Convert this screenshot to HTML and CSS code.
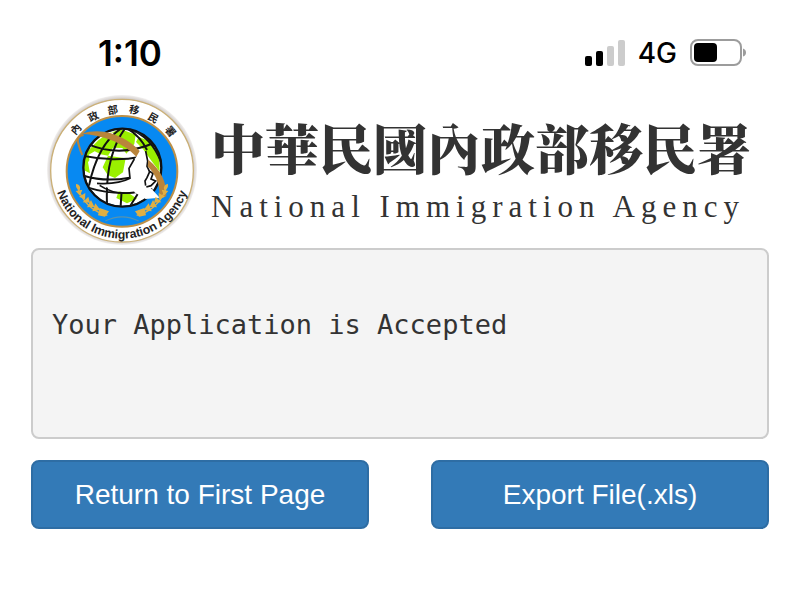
FILE: index.html
```html
<!DOCTYPE html>
<html lang="en">
<head>
<meta charset="utf-8">
<meta name="viewport" content="width=device-width, initial-scale=1">
<title>National Immigration Agency</title>
<link rel="stylesheet" href="styles.css">
</head>
<body>
<div class="status-bar">
  <time class="clock">1:10</time>
  <div class="indicators">
    <svg class="signal" viewBox="0 0 40 26" aria-hidden="true">
      <rect x="0" y="16" width="7" height="10" rx="2"/>
      <rect x="11" y="11" width="7" height="15" rx="2"/>
      <rect class="off" x="22" y="6" width="7" height="20" rx="2"/>
      <rect class="off" x="33" y="0" width="7" height="26" rx="2"/>
    </svg>
    <span class="network">4G</span>
    <svg class="battery" viewBox="0 0 56 28" aria-hidden="true">
      <rect x="1" y="1" width="50" height="25" rx="7" fill="#fff" stroke="#9c9c9c" stroke-width="2"/>
      <rect x="4" y="4" width="23" height="19" rx="4" fill="#000"/>
      <path d="M53 9.500q3 1 3 4t-3 4z" fill="#9c9c9c"/>
    </svg>
  </div>
</div>
<header class="brand">
  <svg class="seal" viewBox="22 22 450 450" role="img" aria-label="Agency seal">
    <defs>
      <path id="arc-bottom" d="M44 282A206 206 0 0 0 450 282"/>
      <radialGradient id="rim">
        <stop offset=".94" stop-color="#c9c3c0"/>
        <stop offset="1" stop-color="#f3f1f0"/>
      </radialGradient>
      <clipPath id="globe"><circle cx="248" cy="240" r="115"/></clipPath>
    </defs>
    <circle cx="247" cy="247" r="225" fill="url(#rim)"/>
    <circle cx="247" cy="249" r="214" fill="#fff" stroke="#cbb076" stroke-width="4"/>
    <circle cx="247" cy="251" r="166" fill="#0789f2" stroke="#bd9048" stroke-width="6"/>
    <g class="seal-cjk">
      <text transform="translate(109 125) rotate(-48)" dy="11">內</text>
      <text transform="translate(161 87) rotate(-28)" dy="11">政</text>
      <text transform="translate(219 67) rotate(-9)" dy="11">部</text>
      <text transform="translate(284 67) rotate(11)" dy="11">移</text>
      <text transform="translate(341 91) rotate(30)" dy="11">民</text>
      <text transform="translate(392 131) rotate(50)" dy="11">署</text>
    </g>
    <text class="seal-latin"><textPath href="#arc-bottom" startOffset="50%">National Immigration Agency</textPath></text>
    <g clip-path="url(#globe)">
      <circle cx="248" cy="240" r="115" fill="#fff"/>
      <path fill="#9af000" d="M176 158Q207 130 248 126L288 141 284 169 260 198 248 181 220 180 205 204 164 196 145 224 151 257 132 247 129 205zM205 204l53 8-8 42-24 17-22-9-15-23zM297 148l31 12 30 42 2 50-26-34-24-34-21-21zM238 308l30 9 24 16-30 14-32-16z"/>
      <path fill="#fff" d="M199 147l17-13 13 4-19 16zM147 201l18-10 17 8-14 11-19 7z"/>
      <g fill="none" stroke="#111" stroke-width="6">
        <path d="M248 120Q175 166 148 294M257 121Q196 204 202 348M258 120Q300 142 322 187M260 120Q336 144 365 226M146 170Q245 211 349 163M128 204Q220 224 305 207M128 263Q193 284 270 270M145 300Q242 330 338 304M247 293l-4 62M296 316l-24 38"/>
      </g>
    </g>
    <circle cx="248" cy="240" r="117" fill="none" stroke="#111" stroke-width="7"/>
    <path d="M304 187L284 216 268 242 271 274Q230 292 177 286 226 318 284 314L318 334 360 330 334 302 318 294 314 272 326 246 318 214z" fill="#fff"/>
    <path d="M284 214L268 242 271 272Q235 291 172 287M180 293Q226 324 284 314M318 190l6 30-2 16 8 16-8 18-6 10 2 14M326 248l14 10-6 16 14 6-14 14-14 4" fill="none" stroke="#111" stroke-width="5"/>
    <path d="M132 142Q108 145 117 171 122 190 128 202" fill="none" stroke="#b9843b" stroke-width="6"/>
    <path d="M124 138Q190 118 250 152 280 168 300 190L290 207Q262 178 222 160 172 140 124 138zM326 216Q382 262 380 326L358 334Q366 280 324 236z" fill="#b9843b"/>
    <g fill="none" stroke="#d9ae4f" stroke-width="4">
      <path d="M112 295q24 72 91 88M382 295q-24 72-91 88"/>
      <path d="M197 400q50-25 100 0" stroke="#5793ad"/>
    </g>
    <g fill="#e0af43">
      <path d="M109 289q15 2 12 18-14-3-12-18zM108 310l20-4-7 18zM118 327l19-11-1 19zM129 344l17-17 5 18zM142 359l12-22 10 20zM158 371l9-24 15 20zM175 383l5-22 28 10-12 16z"/>
      <path d="M385 289q-15 2-12 18 14-3 12-18zM386 310l-20-4 7 18zM376 327l-19-11 1 19zM365 344l-17-17-5 18zM352 359l-12-22-10 20zM336 371l-9-24-15 20zM319 383l-5-22-28 10 12 16z"/>
    </g>
  </svg>
  <div class="wordmark">
    <h1 class="name-zh" lang="zh-Hant">中華民國內政部移民署</h1>
    <p class="name-en">National Immigration Agency</p>
  </div>
</header>
<main class="content">
  <pre class="message">Your Application is Accepted</pre>
  <div class="actions">
    <button class="button" type="button">Return to First Page</button>
    <button class="button" type="button">Export File(.xls)</button>
  </div>
</main>
</body>
</html>
```
FILE: styles.css
```css
* {
  box-sizing: border-box;
}

body {
  margin: 0;
  background: #fff;
  color: #333;
  font-family: "Liberation Sans", Arial, sans-serif;
}

.status-bar {
  display: flex;
  align-items: center;
  justify-content: space-between;
  padding: 33px 54px 22px 98px;
  color: #000;
  font-family: Inter, sans-serif;
  line-height: 40px;
}

.clock {
  font-size: 35px;
  font-weight: 600;
}

.indicators {
  display: flex;
  align-items: center;
  gap: 13px;
}

.network {
  font-size: 28px;
  font-weight: 500;
}

.signal {
  width: 40px;
  height: 26px;
}

.signal .off {
  fill: #ccc;
}

.battery {
  width: 56px;
  height: 28px;
}

.brand {
  display: flex;
  align-items: flex-start;
  gap: 14px;
  padding: 0 47px 3px;
}

.seal {
  flex: none;
  width: 150px;
  height: 150px;
}

.seal-cjk {
  font: 700 31px "Noto Sans CJK TC", sans-serif;
  text-anchor: middle;
  fill: #222;
}

.seal-latin {
  font: 700 37px "Liberation Sans", Arial, sans-serif;
  text-anchor: middle;
  fill: #222;
}

.wordmark {
  padding-top: 20px;
  white-space: nowrap;
}

.name-zh {
  margin: 0;
  font: 900 54px/64px "Noto Serif CJK TC", "Noto Sans CJK TC", serif;
}

.name-en {
  margin: 10px 0 0;
  font: 31px/36px "Liberation Serif", "Times New Roman", serif;
  letter-spacing: 6px;
}

.content {
  padding: 0 31px 62px;
}

.message {
  min-height: 191px;
  margin: 0 0 21px;
  padding: 59px 19px;
  border: 2px solid #ccc;
  border-radius: 8px;
  background: #f4f4f4;
  font: 27px/32px "DejaVu Sans Mono", monospace;
  white-space: pre-wrap;
}

.actions {
  display: grid;
  grid-template-columns: 1fr 1fr;
  gap: 62px;
}

.button {
  padding: 16px 12px;
  border: 2px solid #2e6da4;
  border-radius: 8px;
  background: #337ab7;
  color: #fff;
  font: 28px/33px "Liberation Sans", Arial, sans-serif;
  cursor: pointer;
}
```
